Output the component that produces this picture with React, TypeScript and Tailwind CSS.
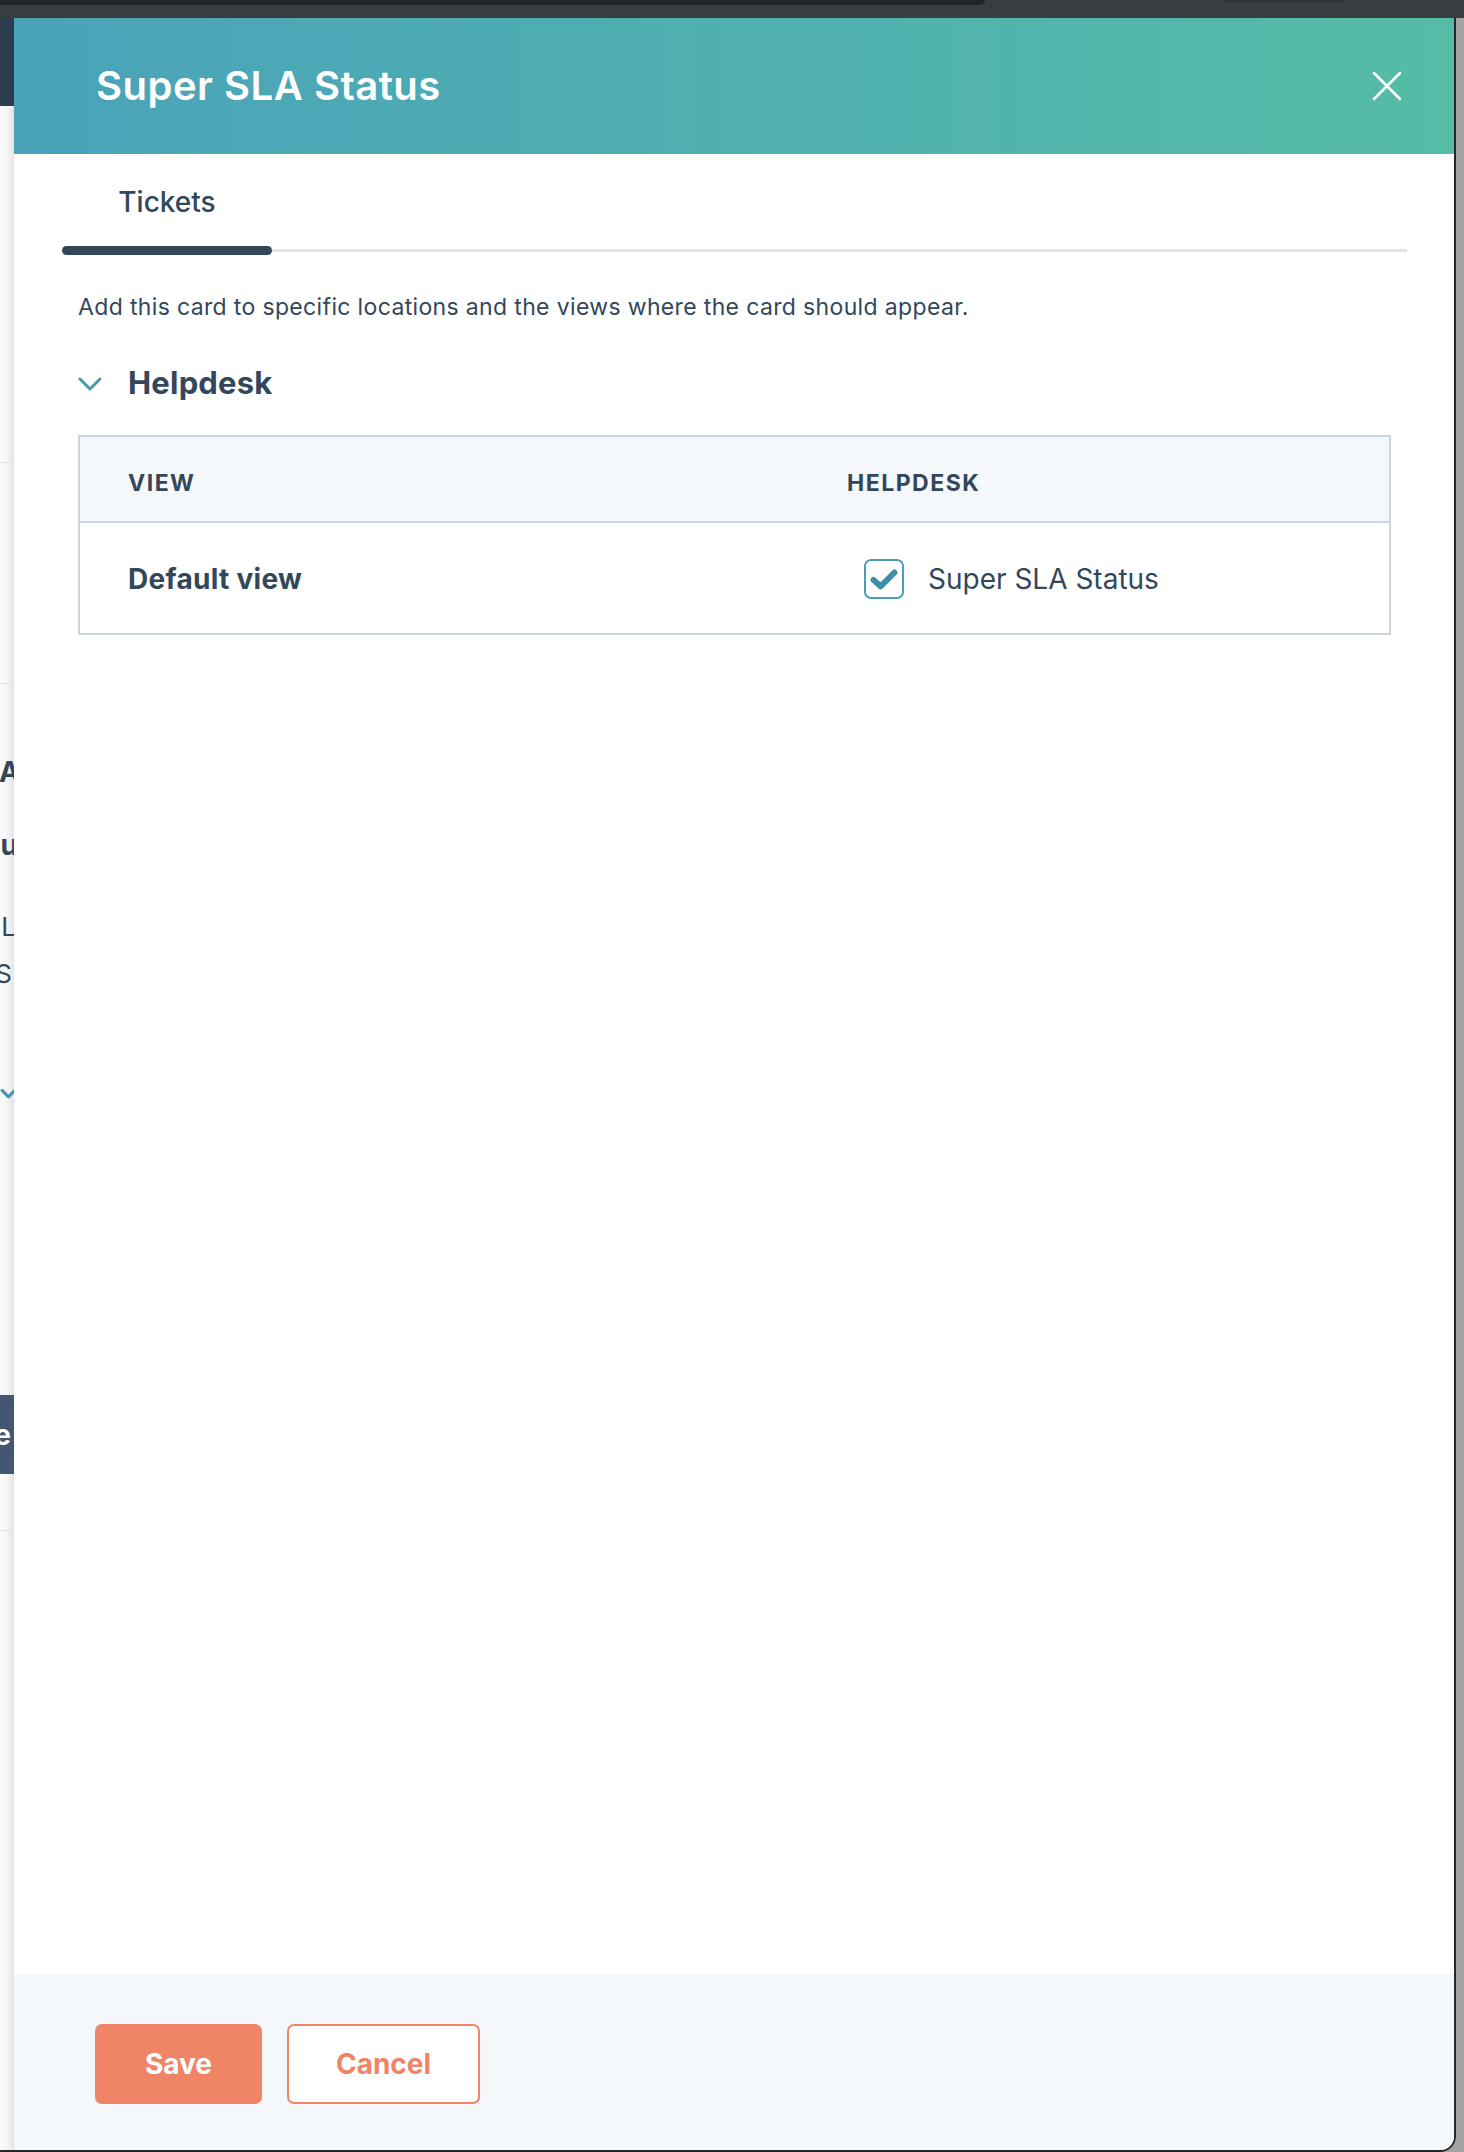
import React from "react";

function TopBar() {
  return (
    <div className="h-[18px] shrink-0 bg-[#383e40] flex items-start">
      <div className="w-[985px] h-[5px] bg-[#1f2628] rounded-br-[6px]" />
      <div className="w-[240px]" />
      <div className="w-[120px] h-[3px] bg-[#2f3537] rounded-b-[4px]" />
    </div>
  );
}

function Frag({ children, cls }: { children: React.ReactNode; cls: string }) {
  return (
    <div className={"shrink-0 flex justify-end items-center overflow-hidden whitespace-nowrap " + cls}>
      {children}
    </div>
  );
}

function LeftStrip() {
  return (
    <div className="w-[14px] shrink-0 flex flex-col overflow-hidden bg-linear-to-r from-[#fbfbfb] via-[#f5f5f5] to-[#e4e4e4] text-[#33475b] font-['Inter',sans-serif]">
      <div className="h-[88px] shrink-0 bg-[#2d3e50]" />
      <div className="h-[356px] shrink-0" />
      <div className="h-[1px] shrink-0 bg-[#dfe3eb]" />
      <div className="h-[220px] shrink-0" />
      <div className="h-[1px] shrink-0 bg-[#dfe3eb]" />
      <div className="h-[76px] shrink-0" />
      <Frag cls="h-[24px] text-[28px] font-bold leading-[24px] mr-[-6px]">A</Frag>
      <div className="h-[48px] shrink-0" />
      <Frag cls="h-[26px] text-[28px] font-bold leading-[26px] mr-[-4px]">Su</Frag>
      <div className="h-[57px] shrink-0" />
      <Frag cls="h-[24px] text-[26px] leading-[24px] mr-[-2px]">SL</Frag>
      <div className="h-[22px] shrink-0" />
      <Frag cls="h-[26px] text-[26px] leading-[26px] mr-[2px]">S</Frag>
      <div className="h-[97px] shrink-0" />
      <Frag cls="h-[20px] mr-[-3px]">
        <svg width="17" height="12" viewBox="0 0 24 16" fill="none" className="shrink-0">
          <path d="M3 3 L12 12 L21 3" stroke="#4a98b0" strokeWidth="4.5" strokeLinecap="round" strokeLinejoin="round" />
        </svg>
      </Frag>
      <div className="h-[291px] shrink-0" />
      <Frag cls="h-[79px] bg-[#435672] text-white text-[28px] font-bold mr-0">
        <span className="mr-[3px]">e</span>
      </Frag>
      <div className="h-[56px] shrink-0" />
      <div className="h-[1px] shrink-0 bg-[#dfe3eb]" />
    </div>
  );
}

function CloseIcon() {
  return (
    <svg width="30" height="30" viewBox="0 0 30 30" fill="none">
      <path d="M2 2 L28 28 M28 2 L2 28" stroke="white" strokeWidth="2.6" strokeLinecap="round" />
    </svg>
  );
}

function Chevron() {
  return (
    <svg width="24" height="14" viewBox="0 0 24 14" fill="none">
      <path d="M2 2 L12 12 L22 2" stroke="#4a98b0" strokeWidth="3" strokeLinecap="round" strokeLinejoin="round" />
    </svg>
  );
}

function Checkbox() {
  return (
    <div className="w-[40px] h-[40px] shrink-0 rounded-[7px] border-2 border-[#4c9db5] bg-white flex items-center justify-center">
      <svg width="34" height="34" viewBox="0 0 24 24" fill="none">
        <path d="M4.6 12.6 L9.6 17.2 L19.4 7.4" stroke="#3e8ea9" strokeWidth="4.2" strokeLinecap="round" strokeLinejoin="round" />
      </svg>
    </div>
  );
}

function Modal() {
  return (
    <div className="flex-1 flex flex-col bg-white font-['Inter',sans-serif] text-[#33475b]">
      <div className="h-[136px] shrink-0 bg-linear-to-r from-[#4aa3b9] to-[#55bca6] flex items-center justify-between pl-[82px] pr-[52px]">
        <div className="text-white text-[40px] font-semibold leading-[46px] tracking-[0.5px]">Super SLA Status</div>
        <CloseIcon />
      </div>
      <div className="flex-1 flex flex-col pl-[64px] pr-[63px]">
        <div className="mx-[-16px] pt-[30px]">
          <div className="w-[210px] text-center text-[28px] leading-[36px] font-medium">Tickets</div>
          <div className="mt-[26px] flex items-center">
            <div className="w-[210px] h-[9px] rounded-full bg-[#33475b]" />
            <div className="flex-1 h-[3px] bg-[#dfe3eb]" />
          </div>
        </div>
        <div className="mt-[36px] text-[23px] leading-[32px] tracking-[0.35px]">
          Add this card to specific locations and the views where the card should appear.
        </div>
        <div className="mt-[40px] h-[40px] flex items-center">
          <div className="w-[50px] pt-[1px]">
            <Chevron />
          </div>
          <div className="text-[31px] font-bold leading-[40px] tracking-[0.2px]">Helpdesk</div>
        </div>
        <div className="mt-[32px] border-2 border-[#cbd6e2] flex flex-col">
          <div className="h-[86px] bg-[#f5f8fa] border-b-2 border-[#cbd6e2] flex items-center pt-[9px] text-[23px] font-bold tracking-[1.5px]">
            <div className="w-[719px] pl-[48px]">VIEW</div>
            <div className="pl-[48px]">HELPDESK</div>
          </div>
          <div className="h-[110px] flex items-center pt-[2px]">
            <div className="w-[719px] pl-[48px] text-[28px] font-bold tracking-[0.3px]">Default view</div>
            <div className="pl-[65px] flex items-center gap-[24px]">
              <Checkbox />
              <span className="text-[28px]">Super SLA Status</span>
            </div>
          </div>
        </div>
        <div className="flex-1" />
      </div>
      <div className="h-[176px] shrink-0 bg-[#f5f8fa] pl-[81px] pt-[50px] flex items-start gap-[25px]">
        <button className="w-[167px] h-[80px] rounded-[7px] bg-[#f08467] text-white text-[28px] font-bold">Save</button>
        <button className="w-[193px] h-[80px] rounded-[7px] bg-white border-2 border-[#f08467] text-[#f08467] text-[28px] font-bold">Cancel</button>
      </div>
    </div>
  );
}

export default function App() {
  return (
    <div className="w-[1464px] h-[2152px] flex flex-col bg-[#a4a4a4] overflow-hidden">
      <TopBar />
      <div className="flex-1 min-h-0 flex">
        <div className="w-[1456px] shrink-0 flex rounded-br-[16px] border-r-2 border-b-2 border-[#262626] overflow-hidden bg-white">
          <LeftStrip />
          <Modal />
        </div>
        <div className="flex-1" />
      </div>
    </div>
  );
}
